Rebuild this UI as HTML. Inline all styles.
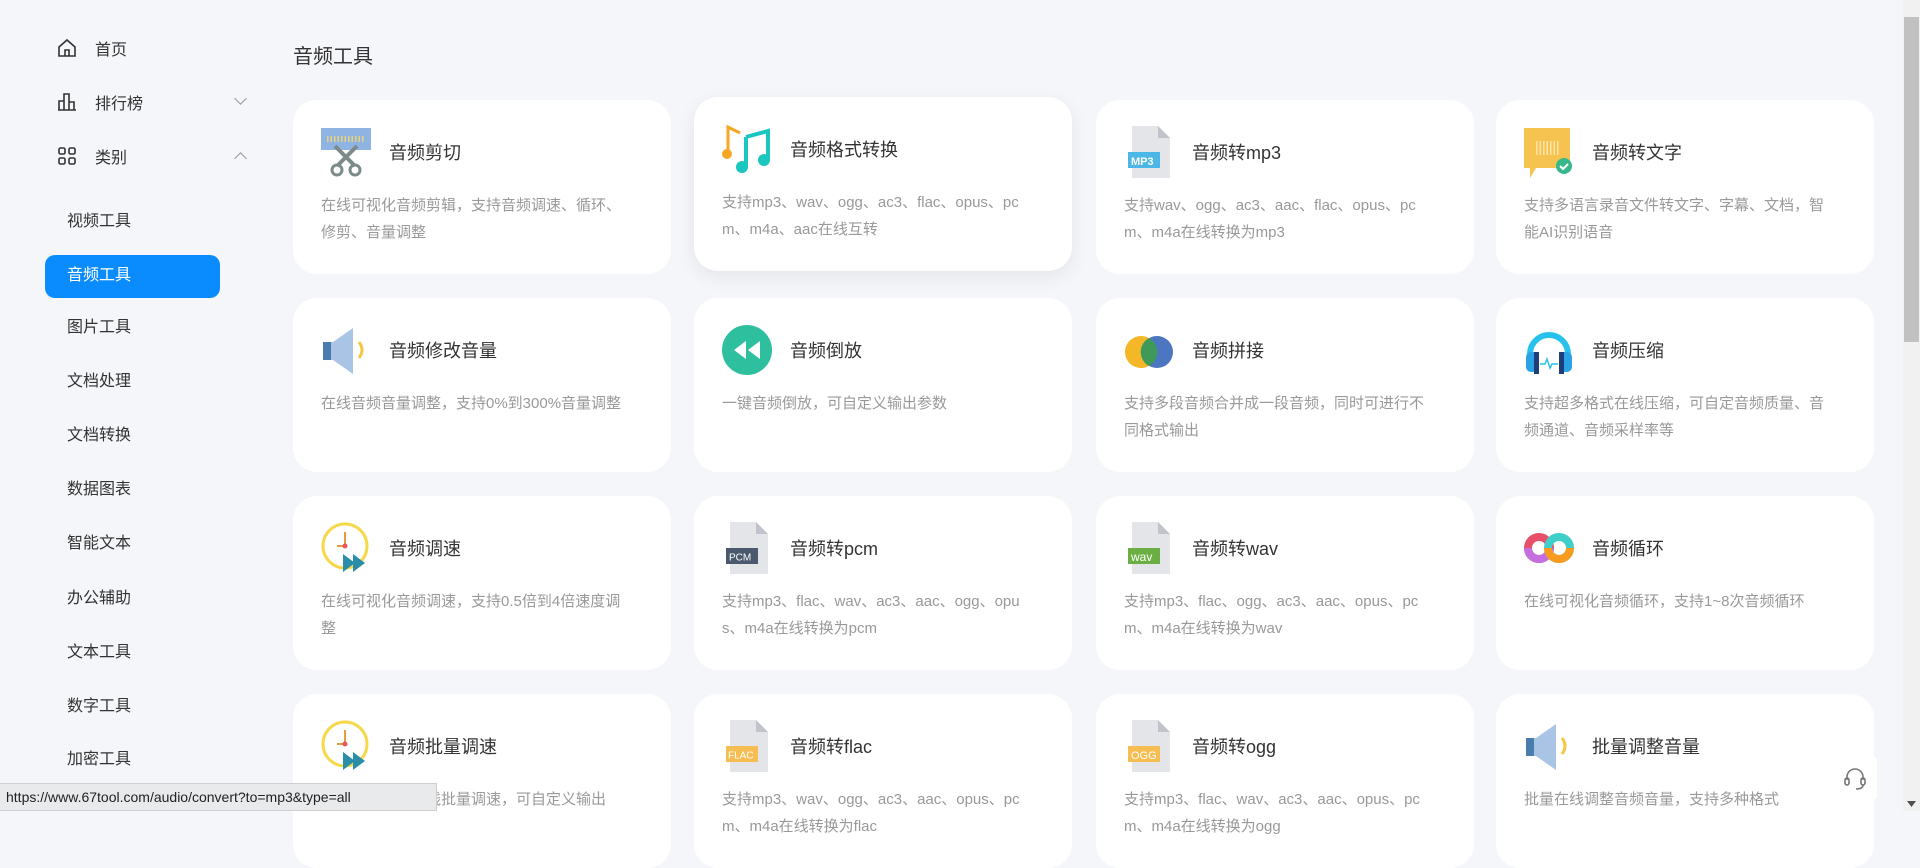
<!DOCTYPE html>
<html><head><meta charset="utf-8">
<style>
*{box-sizing:border-box;margin:0;padding:0}
body{width:1920px;height:811px;overflow:hidden;background:#f5f6fa;font-family:"Liberation Sans","Noto Sans CJK SC",sans-serif;position:relative}
.nav{position:absolute;left:0;top:0;width:260px}
.ni{position:absolute;left:57px;font-size:16px;color:#333;display:flex;align-items:center;height:24px}
.ni svg{margin-right:18px}
.chev{position:absolute;left:236px;width:9px;height:9px;border-right:1.3px solid #999;border-bottom:1.3px solid #999}
.sub{position:absolute;left:67px;font-size:16px;color:#333;line-height:24px}
.pill{position:absolute;left:45px;top:255px;width:175px;height:43px;border-radius:10px;background:#0a8cff}
h1{position:absolute;left:293px;top:40px;font-size:20px;font-weight:normal;color:#333}
.card{position:absolute;width:378px;height:174px;background:#fff;border-radius:24px}
.card svg.ic{position:absolute;left:28px;top:26px;width:50px;height:52px}
.card .t{position:absolute;left:96px;top:41px;font-size:18px;color:#333;line-height:24px}
.card .d{position:absolute;left:28px;top:92px;width:312px;font-size:15px;color:#999;line-height:27px;word-break:break-all}
.hov{box-shadow:0 6px 20px rgba(0,0,0,0.07)}
.sb{position:absolute;right:0;top:0;width:17px;height:811px;background:#f1f1f1}
.th{position:absolute;right:1px;top:17px;width:15px;height:325px;background:#c1c1c1}
.status{position:absolute;left:0;top:783px;width:437px;height:28px;background:#e9eaec;border:1px solid #d0d0d0;border-left:none;font-size:14px;color:#222;padding:5px 0 0 6px}
.fb{position:absolute;left:1833px;top:756px;width:44px;height:44px;background:#fff;border-radius:4px}
</style></head><body>
<div class="nav">
 <div class="ni" style="top:36px"><svg width="20" height="20" viewBox="0 0 20 20" fill="none" stroke="#333" stroke-width="1.6"><path d="M2 9L10 2l8 7v9H2z"/><path d="M8 18v-6h4v6"/></svg>首页</div>
 <div class="ni" style="top:90px"><svg width="20" height="20" viewBox="0 0 20 20" fill="none" stroke="#333" stroke-width="1.6"><path d="M1 18h18M2 18V9h5v9M7 18V2h5v16M12 18v-8h5v8"/></svg>排行榜</div>
 <div class="chev" style="top:94px;transform:rotate(45deg)"></div>
 <div class="ni" style="top:144px"><svg width="20" height="20" viewBox="0 0 20 20" fill="none" stroke="#333" stroke-width="1.6"><rect x="2" y="2" width="6" height="6" rx="1.5"/><rect x="12" y="2" width="6" height="6" rx="1.5"/><rect x="2" y="12" width="6" height="6" rx="1.5"/><rect x="12" y="12" width="6" height="6" rx="1.5"/></svg>类别</div>
 <div class="chev" style="top:154px;transform:rotate(225deg)"></div>
 <div class="pill"></div>
 <div class="sub" style="top:210px">视频工具</div>
 <div class="sub" style="top:264px;color:#fff">音频工具</div>
 <div class="sub" style="top:316px">图片工具</div>
 <div class="sub" style="top:370px">文档处理</div>
 <div class="sub" style="top:424px">文档转换</div>
 <div class="sub" style="top:478px">数据图表</div>
 <div class="sub" style="top:532px">智能文本</div>
 <div class="sub" style="top:587px">办公辅助</div>
 <div class="sub" style="top:641px">文本工具</div>
 <div class="sub" style="top:695px">数字工具</div>
 <div class="sub" style="top:748px">加密工具</div>
</div>
<h1>音频工具</h1>

<div class="card" style="left:293px;top:100px"><svg class="ic" viewBox="0 0 50 52"><rect x="0" y="2" width="50" height="22" fill="#8fb4e3"/><path d="M6 13h38" stroke="#e8d27a" stroke-width="6" stroke-dasharray="1.5 2"/><path d="M14 20l20 20M36 20L16 40" stroke="#7d8a8a" stroke-width="4"/><circle cx="16" cy="44" r="5" fill="none" stroke="#7d8a8a" stroke-width="3"/><circle cx="34" cy="44" r="5" fill="none" stroke="#7d8a8a" stroke-width="3"/></svg><div class="t">音频剪切</div><div class="d">在线可视化音频剪辑，支持音频调速、循环、修剪、音量调整</div></div>
<div class="card hov" style="left:694px;top:97px"><svg class="ic" viewBox="0 0 50 52"><path d="M6 30V4l12 6" stroke="#f6a623" stroke-width="3" fill="none"/><circle cx="5" cy="31" r="5" fill="#f6a623"/><path d="M24 14l22-6v28M24 14v30" stroke="#1cc6c0" stroke-width="4" fill="none"/><circle cx="20" cy="44" r="6" fill="#1cc6c0"/><circle cx="42" cy="37" r="6" fill="#1cc6c0"/></svg><div class="t">音频格式转换</div><div class="d">支持mp3、wav、ogg、ac3、flac、opus、pcm、m4a、aac在线互转</div></div>
<div class="card" style="left:1096px;top:100px"><svg class="ic" viewBox="0 0 50 52"><path d="M8 0h26l12 12v40H8z" fill="#e3e5e8"/><path d="M34 0v12h12" fill="#c0c4ca"/><rect x="4" y="26" width="32" height="16" fill="#4cb6e6"/><text x="7" y="39" font-size="11" fill="#fff" font-family="Liberation Sans" font-weight="bold">MP3</text></svg><div class="t">音频转mp3</div><div class="d">支持wav、ogg、ac3、aac、flac、opus、pcm、m4a在线转换为mp3</div></div>
<div class="card" style="left:1496px;top:100px"><svg class="ic" viewBox="0 0 50 52"><path d="M0 2h46v40H12l-6 10v-10H0z" fill="#f6c350"/><path d="M12 22h24" stroke="#fde6a8" stroke-width="14" stroke-dasharray="1.5 2"/><circle cx="40" cy="40" r="8" fill="#38b88a"/><path d="M36 40l3 3 5-5" stroke="#fff" stroke-width="2" fill="none"/></svg><div class="t">音频转文字</div><div class="d">支持多语言录音文件转文字、字幕、文档，智能AI识别语音</div></div>

<div class="card" style="left:293px;top:298px"><svg class="ic" viewBox="0 0 50 52"><path d="M2 18h10l20-14v46L12 36H2z" fill="#aac4e6"/><rect x="2" y="18" width="8" height="18" fill="#4a7cae"/><path d="M38 18q6 8 0 16" stroke="#f4c842" stroke-width="3" fill="none"/></svg><div class="t">音频修改音量</div><div class="d">在线音频音量调整，支持0%到300%音量调整</div></div>
<div class="card" style="left:694px;top:298px"><svg class="ic" viewBox="0 0 50 52"><circle cx="25" cy="26" r="25" fill="#2ebf9f"/><path d="M24 17v18l-12-9zM38 17v18l-12-9z" fill="#fff"/></svg><div class="t">音频倒放</div><div class="d">一键音频倒放，可自定义输出参数</div></div>
<div class="card" style="left:1096px;top:298px"><svg class="ic" viewBox="0 0 50 52"><circle cx="17" cy="28" r="16" fill="#f4b728"/><circle cx="33" cy="28" r="16" fill="#4c76c0"/><path d="M25 14a16 16 0 0 1 0 28a16 16 0 0 1 0-28z" fill="#3f9a5a"/></svg><div class="t">音频拼接</div><div class="d">支持多段音频合并成一段音频，同时可进行不同格式输出</div></div>
<div class="card" style="left:1496px;top:298px"><svg class="ic" viewBox="0 0 50 52"><path d="M6 30a19 19 0 0 1 38 0" stroke="#28c1ec" stroke-width="6" fill="none"/><rect x="2" y="28" width="12" height="20" rx="5" fill="#2aa2e6"/><rect x="36" y="28" width="12" height="20" rx="5" fill="#2aa2e6"/><rect x="10" y="28" width="5" height="22" fill="#1f3d7a"/><rect x="35" y="28" width="5" height="22" fill="#1f3d7a"/><path d="M16 40h5l2-5 3 9 2-4h6" stroke="#28c1ec" stroke-width="1.5" fill="none"/></svg><div class="t">音频压缩</div><div class="d">支持超多格式在线压缩，可自定音频质量、音频通道、音频采样率等</div></div>

<div class="card" style="left:293px;top:496px"><svg class="ic" viewBox="0 0 50 52"><circle cx="24" cy="24" r="22" fill="#fff" stroke="#f6d84a" stroke-width="3"/><path d="M24 10v14h-8" stroke="#e89b3a" stroke-width="2" fill="none"/><circle cx="24" cy="24" r="2.5" fill="#e55"/><path d="M22 32v18l12-9zM32 32v18l12-9z" fill="#2a8ea8"/></svg><div class="t">音频调速</div><div class="d">在线可视化音频调速，支持0.5倍到4倍速度调整</div></div>
<div class="card" style="left:694px;top:496px"><svg class="ic" viewBox="0 0 50 52"><path d="M8 0h26l12 12v40H8z" fill="#e3e5e8"/><path d="M34 0v12h12" fill="#c0c4ca"/><rect x="4" y="26" width="32" height="16" fill="#4a5a6c"/><text x="7" y="38.5" font-size="10" fill="#fff" font-family="Liberation Sans">PCM</text></svg><div class="t">音频转pcm</div><div class="d">支持mp3、flac、wav、ac3、aac、ogg、opus、m4a在线转换为pcm</div></div>
<div class="card" style="left:1096px;top:496px"><svg class="ic" viewBox="0 0 50 52"><path d="M8 0h26l12 12v40H8z" fill="#e3e5e8"/><path d="M34 0v12h12" fill="#c0c4ca"/><rect x="4" y="26" width="32" height="16" fill="#6aae44"/><text x="7" y="39" font-size="12" fill="#fff" font-family="Liberation Sans">wav</text></svg><div class="t">音频转wav</div><div class="d">支持mp3、flac、ogg、ac3、aac、opus、pcm、m4a在线转换为wav</div></div>
<div class="card" style="left:1496px;top:496px"><svg class="ic" viewBox="0 0 50 52"><circle cx="15" cy="26" r="11" fill="none" stroke="#e8506a" stroke-width="8"/><path d="M4 26a11 11 0 0 0 22 0" stroke="#c46ee0" stroke-width="8" fill="none"/><circle cx="35" cy="26" r="11" fill="none" stroke="#3ed0c8" stroke-width="8"/><path d="M24 26a11 11 0 0 0 22 0" stroke="#f79b1f" stroke-width="8" fill="none"/></svg><div class="t">音频循环</div><div class="d">在线可视化音频循环，支持1~8次音频循环</div></div>

<div class="card" style="left:293px;top:694px"><svg class="ic" viewBox="0 0 50 52"><circle cx="24" cy="24" r="22" fill="#fff" stroke="#f6d84a" stroke-width="3"/><path d="M24 10v14h-8" stroke="#e89b3a" stroke-width="2" fill="none"/><circle cx="24" cy="24" r="2.5" fill="#e55"/><path d="M22 32v18l12-9zM32 32v18l12-9z" fill="#2a8ea8"/></svg><div class="t">音频批量调速</div><div class="d">支持多种格式在线批量调速，可自定义输出</div></div>
<div class="card" style="left:694px;top:694px"><svg class="ic" viewBox="0 0 50 52"><path d="M8 0h26l12 12v40H8z" fill="#e3e5e8"/><path d="M34 0v12h12" fill="#c0c4ca"/><rect x="4" y="26" width="32" height="16" fill="#f6bd52"/><text x="6" y="38.5" font-size="10" fill="#fff" font-family="Liberation Sans">FLAC</text></svg><div class="t">音频转flac</div><div class="d">支持mp3、wav、ogg、ac3、aac、opus、pcm、m4a在线转换为flac</div></div>
<div class="card" style="left:1096px;top:694px"><svg class="ic" viewBox="0 0 50 52"><path d="M8 0h26l12 12v40H8z" fill="#e3e5e8"/><path d="M34 0v12h12" fill="#c0c4ca"/><rect x="4" y="26" width="32" height="16" fill="#f6bd52"/><text x="7" y="39" font-size="11" fill="#fff" font-family="Liberation Sans">OGG</text></svg><div class="t">音频转ogg</div><div class="d">支持mp3、flac、wav、ac3、aac、opus、pcm、m4a在线转换为ogg</div></div>
<div class="card" style="left:1496px;top:694px"><svg class="ic" viewBox="0 0 50 52"><path d="M2 18h10l20-14v46L12 36H2z" fill="#aac4e6"/><rect x="2" y="18" width="8" height="18" fill="#4a7cae"/><path d="M38 18q6 8 0 16" stroke="#f4c842" stroke-width="3" fill="none"/></svg><div class="t">批量调整音量</div><div class="d">批量在线调整音频音量，支持多种格式</div></div>

<div class="fb"><svg width="44" height="44" viewBox="0 0 44 44" fill="none" stroke="#777" stroke-width="1.6"><path d="M14 24v-3a8 8 0 0 1 16 0v3"/><rect x="12" y="22" width="4" height="7" rx="2"/><rect x="28" y="22" width="4" height="7" rx="2"/><path d="M30 29q0 4-7 4"/></svg></div>
<div class="sb"><div class="th"></div><svg style="position:absolute;left:4px;bottom:4px" width="9" height="6"><path d="M0 0h9L4.5 6z" fill="#505050"/></svg></div>
<div class="status">https://www.67tool.com/audio/convert?to=mp3&amp;type=all</div>
</body></html>
